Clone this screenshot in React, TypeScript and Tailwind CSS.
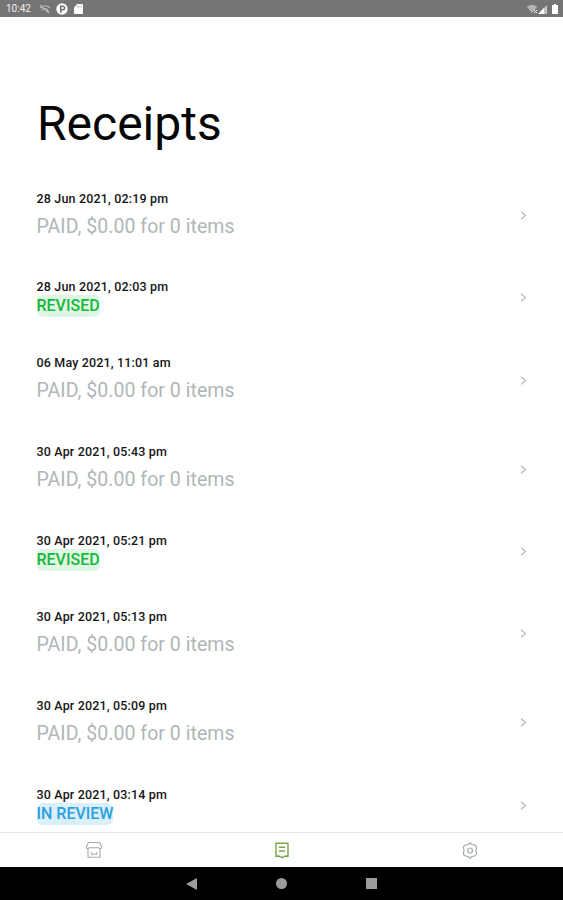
import { clsx } from "clsx"

type Status = "paid" | "revised" | "review"

const receipts: { date: string; status: Status }[] = [
    { date: "28 Jun 2021, 02:19 pm", status: "paid" },
    { date: "28 Jun 2021, 02:03 pm", status: "revised" },
    { date: "06 May 2021, 11:01 am", status: "paid" },
    { date: "30 Apr 2021, 05:43 pm", status: "paid" },
    { date: "30 Apr 2021, 05:21 pm", status: "revised" },
    { date: "30 Apr 2021, 05:13 pm", status: "paid" },
    { date: "30 Apr 2021, 05:09 pm", status: "paid" },
    { date: "30 Apr 2021, 03:14 pm", status: "review" },
]

function StatusBar() {
    return (
        <div className="flex h-[17px] shrink-0 items-center bg-[#757575] pl-[6px] pr-[5px] pt-px text-white">
            <span className="w-[33px] text-[10px] leading-none text-[#f0f0f0]">10:42</span>
            <svg className="h-[10px] w-[12px] opacity-50" viewBox="0 0 12 10" fill="none" stroke="currentColor" strokeWidth="1.1">
                <path d="M1 4c3-3 7-3 10 0M3 6c2-2 4-2 6 0M8 5l2 4" />
                <path d="M1 1l9 8" />
            </svg>
            <svg className="ml-[5px] h-[12px] w-[12px]" viewBox="0 0 12 12">
                <circle cx="6" cy="6" r="5.7" fill="currentColor" />
                <path d="M4.8 10V3.2h2a1.7 1.7 0 0 1 0 3.5h-2" fill="none" stroke="#757575" strokeWidth="1.6" />
            </svg>
            <svg className="ml-[6px] h-[10px] w-[9px]" viewBox="0 0 9 10">
                <path d="M3.2 0H8q1 0 1 1v8q0 1-1 1H1q-1 0-1-1V3.4z" fill="currentColor" />
                <path d="M3.4 1.5v2M5.2 1.5v2M7 1.5v2" stroke="#9a9a9a" strokeWidth=".7" />
            </svg>
            <svg className="ml-auto h-[10px] w-[11px]" viewBox="0 0 11 10">
                <path d="M0 3Q5-1.500 10 3L5 9z" fill="#b4b4b4" />
                <path d="M7 6l3 3M10 6L7 9" stroke="#eee" />
            </svg>
            <svg className="h-[9px] w-[9px]" viewBox="0 0 9 9">
                <path d="M9 0v9H0z" fill="#c4c4c4" />
                <path d="M6 3v6H0z" fill="#fff" />
            </svg>
            <svg className="ml-[5px] h-[10px] w-[6px]" viewBox="0 0 6 10">
                <path d="M2 0h2v1h2v9H0V1h2z" fill="#fff" />
            </svg>
        </div>
    )
}

function ReceiptRow({ date, status }: { date: string; status: Status }) {
    return (
        <li
            className={clsx(
                "flex shrink-0 items-center justify-between pl-[36.500px] pr-[36px]",
                status === "paid" ? "h-[88.900px]" : "h-[75.800px]",
            )}
        >
            <div className="flex flex-col items-start">
                <p className="text-[12.500px] font-medium leading-[17px] tracking-[0.16px] text-[#161616]">{date}</p>
                {status === "paid" && (
                    <p className="mt-[5px] pb-px text-[19.500px] font-normal leading-[29px] tracking-[0.040px] text-[#b0b6b8]">PAID, $0.00 for 0 items</p>
                )}
                {status === "revised" && (
                    <p className="h-[22px] rounded-[6px] bg-[#e0f6e5] text-[16px] font-medium leading-[21px] text-[#18b83c]">REVISED</p>
                )}
                {status === "review" && (
                    <p className="h-[22px] rounded-[6px] bg-[#d9effa] text-[16px] font-medium leading-[21px] text-[#2b9fe0]">IN REVIEW</p>
                )}
            </div>
            <svg className="h-[9px] w-[7px]" viewBox="0 0 7 9" fill="none" stroke="#b0b0b0" strokeWidth="1.1">
                <path d="M1 .7l4.500 3.800L1 8.300" />
            </svg>
        </li>
    )
}

function TabBar() {
    return (
        <nav className="grid h-[35px] shrink-0 grid-cols-3 place-items-center border-t border-[#e2e4e4] bg-white">
            <svg className="ml-px h-[18px] w-[18px]" viewBox="0 0 18 18" fill="none" stroke="#a5acb0" strokeWidth="1.1" strokeLinejoin="round">
                <path d="M3.500 1.500h11l2 4v1.300q-1.200 1.500-2.500 0H4q-1.300 1.500-2.500 0V5.500z" />
                <path d="M3 8v8.300h12V8M6.500 11v2.200h5V11" />
            </svg>
            <svg className="ml-px h-[17px] w-[16px]" viewBox="0 0 16 17" fill="none" stroke="#78a548" strokeWidth="1.4">
                <path d="M2 1.200h12v13.300l-2-.5-2 .5-2 1.200-2-1.200-2-.5-2 .5z" strokeLinejoin="round" />
                <path d="M5 5.300h6M5 9h6" />
            </svg>
            <svg className="ml-px h-[17px] w-[16px]" viewBox="0 0 16 17" fill="none" stroke="#a5acb0" strokeWidth="1.2" strokeLinejoin="round">
                <path d="M8 .8l2 1.700 3 .6 1.700 1.700-.7 3.700.7 3.700-1.700 1.700-3 .6-2 1.700-2-1.700-3-.6-1.700-1.700.7-3.700-.7-3.700L3 3.100l3-.6z" />
                <circle cx="8" cy="8.500" r="2.500" />
            </svg>
        </nav>
    )
}

export default function App() {
    return (
        <div className="flex h-[900px] w-full flex-col overflow-hidden bg-white font-[Roboto,sans-serif]">
            <StatusBar />
            <main className="min-h-0 flex-1 overflow-hidden">
                <h1 className="h-[154.200px] pl-[37px] pt-[78px] text-[48px] font-normal leading-[58px] text-[#050505]">Receipts</h1>
                <ul className="flex flex-col">
                    {receipts.map((receipt) => (
                        <ReceiptRow key={receipt.date} {...receipt} />
                    ))}
                </ul>
            </main>
            <TabBar />
            {/* Android navigation */}
            <div className="flex h-[33px] shrink-0 items-center justify-center gap-[79px] bg-black text-[#9c9c9c]">
                <svg className="h-[12px] w-[11px]" viewBox="0 0 11 12" fill="currentColor">
                    <path d="M0 6L11 0v12z" />
                </svg>
                <div className="h-[11px] w-[11px] rounded-full bg-[#9c9c9c]" />
                <div className="h-[11px] w-[11px] bg-[#9c9c9c]" />
            </div>
        </div>
    )
}
